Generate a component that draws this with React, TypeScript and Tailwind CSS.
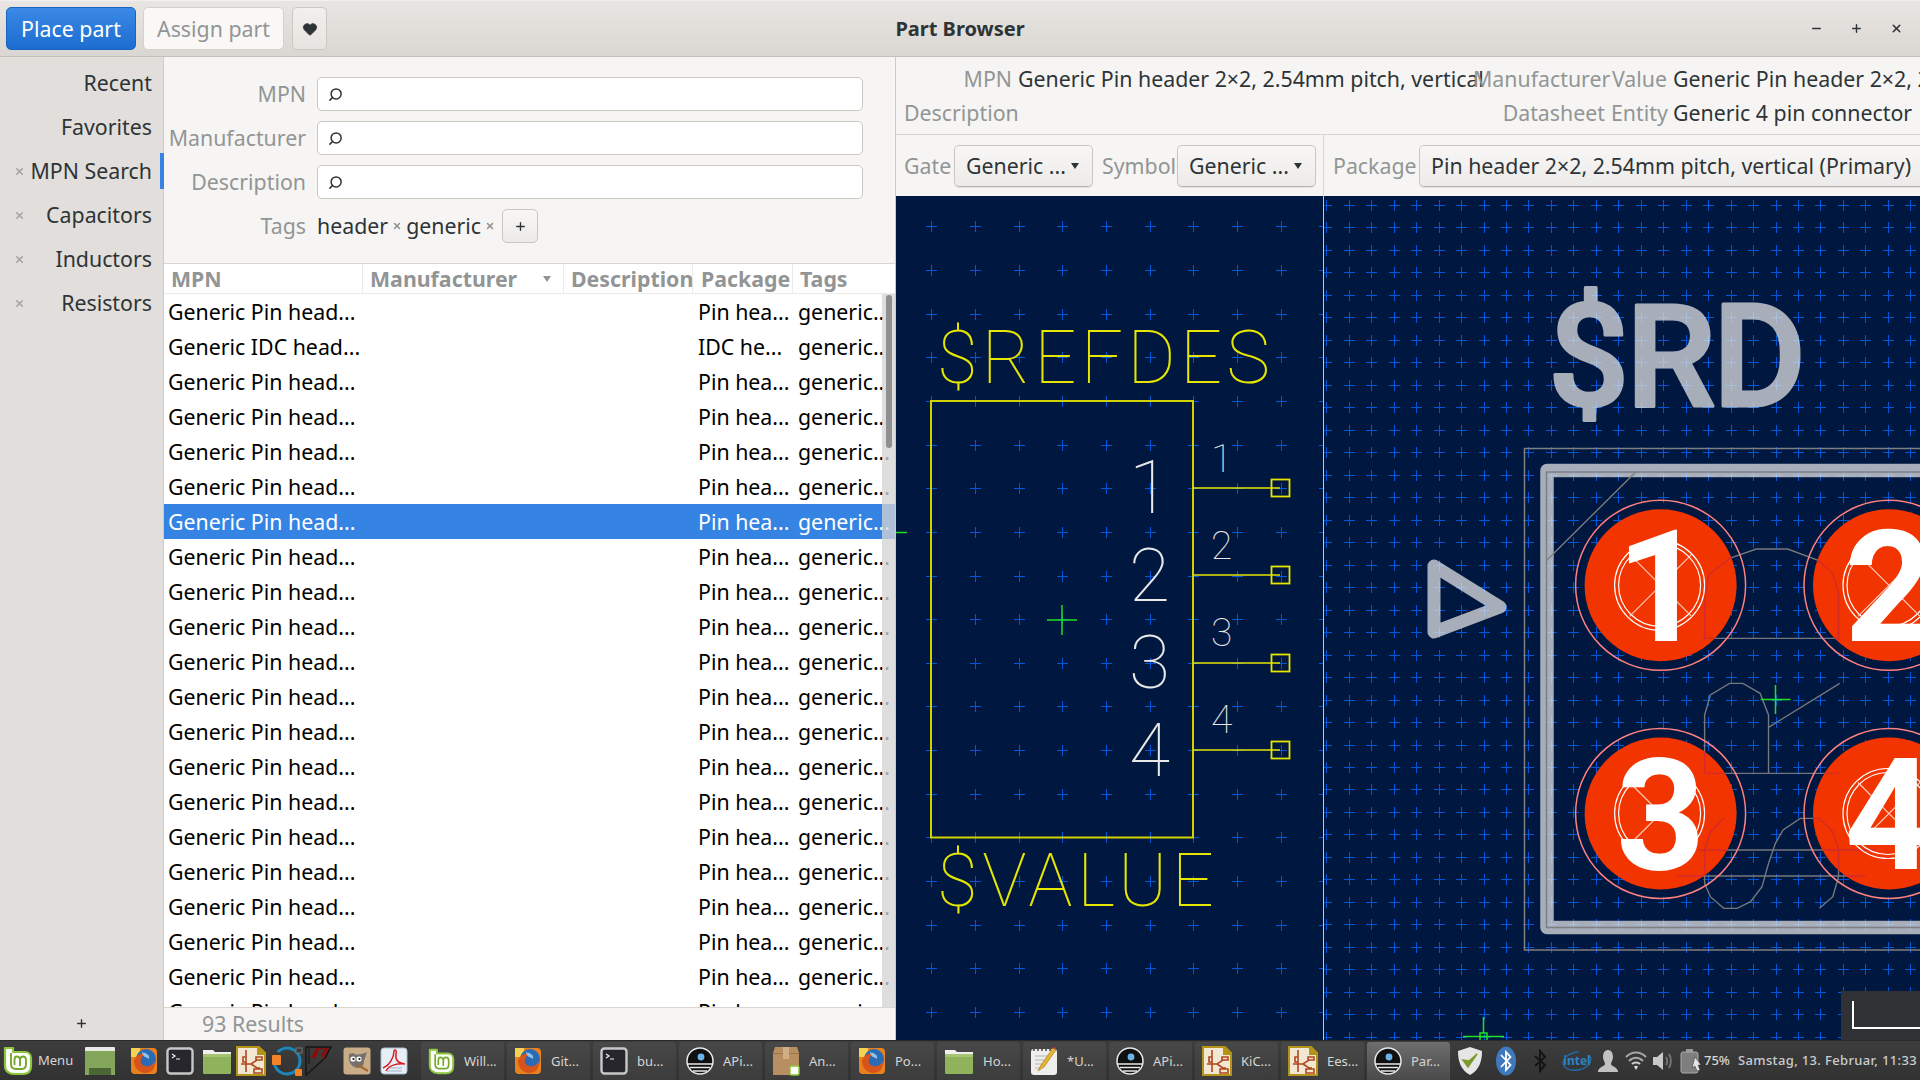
import React from "react";
import { Search, X, Plus, Minus, Heart } from "lucide-react";

const range = (n: number) => Array.from({ length: n }, (_, i) => i);
const crosses = (x0: number, dx: number, nx: number, y0: number, dy: number, ny: number, r = 5.5) => {
  let d = "";
  for (const i of range(nx)) for (const j of range(ny)) {
    const x = Math.round(x0 + i * dx) + 0.5, y = Math.round(y0 + j * dy) + 0.5;
    d += `M${x - r} ${y}H${x + r}M${x} ${y - r}V${y + r}`;
  }
  return d;
};
const z5 = (p: number[][]) => p.map(([x, y]) => `${1320 + x / 2.613},${190 + y / 3}`).join(" ");
const z6 = (p: number[][]) => p.map(([x, y]) => `${1320 + x / 2.613},${630 + y / 3}`).join(" ");

const Arrow = () => (
  <svg width="10" height="6" viewBox="0 0 10 6" className="shrink-0"><path d="M1 0H9L5 6Z" fill="#2e3436" /></svg>
);

const Combo = ({ w, text, arrow = true }: { w: string; text: string; arrow?: boolean }) => (
  <div className={`${w} h-[42px] shrink-0 flex items-center justify-between pl-[11px] pr-[12px] rounded-[5px] border border-[#cdc7c2] border-b-[#b8b2ac] bg-gradient-to-b from-[#f8f7f6] to-[#edebe9] shadow-[0_1px_1px_rgba(0,0,0,0.08)] text-[#2e3436] whitespace-nowrap`}>
    <span>{text}</span>
    {arrow && <Arrow />}
  </div>
);

const SearchRow = ({ label }: { label: string }) => (
  <div className="flex items-center h-[34px]">
    <div className="w-[153px] pr-[11px] text-right text-[#929595]">{label}</div>
    <div className="w-[546px] h-[34px] flex items-center pl-[10px] bg-white rounded-[5px] border border-[#cdc7c2]">
      <Search size={15} strokeWidth={2.4} className="text-[#2e3436] -scale-x-100" />
    </div>
  </div>
);

const tabs = ["Recent", "Favorites", "MPN Search", "Capacitors", "Inductors", "Resistors"];
const rows = range(21);

const Sidebar = () => (
  <div className="w-[164px] shrink-0 bg-[#e1dedb] border-r border-[#cfcac5] flex flex-col">
    <div className="pt-[4px] flex-1">
      {tabs.map((t, i) => (
        <div key={t} className={`h-[44px] flex items-center justify-between pl-[14px] pr-[11px] text-[#2e3436] relative`}>
          {i > 1 ? <X size={11} strokeWidth={3.5} className="text-[#a5a5a3] shrink-0" /> : <span />}
          <span>{t}</span>
          {i === 2 && <div className="absolute right-[-1px] top-[4px] w-[4px] h-[36px] bg-[#3584e4]" />}
        </div>
      ))}
    </div>
    <div className="h-[34px] flex items-center justify-center text-[#2e3436]"><Plus size={13} strokeWidth={2.5} /></div>
  </div>
);

const headers = [
  ["MPN", "pl-[7px]"], ["Manufacturer", "pl-[7px]"], ["Description", "pl-[7px]"], ["Package", "pl-[8px]"], ["Tags", "pl-[7px]"],
];

const List = () => (
  <div className="w-[731px] shrink-0 flex flex-col bg-[#f6f5f4]">
    <div className="h-[206px] shrink-0 pt-[20px] flex flex-col gap-[10px]">
      <SearchRow label="MPN" />
      <SearchRow label="Manufacturer" />
      <SearchRow label="Description" />
      <div className="flex items-center h-[34px]">
        <div className="w-[153px] pr-[11px] text-right text-[#929595]">Tags</div>
        <span className="text-[#2e3436]">header</span>
        <X size={10} strokeWidth={3.5} className="text-[#8e8e8c] mx-[4px]" />
        <span className="text-[#2e3436]">generic</span>
        <X size={10} strokeWidth={3.5} className="text-[#8e8e8c] ml-[4px] mr-[7px]" />
        <div className="w-[36px] h-[34px] flex items-center justify-center rounded-[5px] border border-[#cdc7c2] bg-gradient-to-b from-[#f8f7f6] to-[#edebe9] text-[#2e3436]"><Plus size={13} strokeWidth={2.5} /></div>
      </div>
    </div>
    <div className="flex-1 min-h-0 relative bg-white border-t border-[#d8d5d2] overflow-hidden">
      <div className="grid grid-cols-[199px_201px_129px_100px_102px] h-[30px] border-b border-[#ecebe9] font-bold text-[#929595]">
        {headers.map(([h, c], i) => (
          <div key={h} className={`${c} flex items-center justify-between ${i < 4 ? "border-r border-[#ecebe9]" : ""} ${i === 1 ? "pr-[11px]" : ""}`}>
            <span>{h}</span>
            {i === 1 && <svg width="10" height="6" viewBox="0 0 10 6"><path d="M1 0H9L5 6Z" fill="#929595" /></svg>}
          </div>
        ))}
      </div>
      {rows.map((i) => (
        <div key={i} className={`grid grid-cols-[529px_100px_102px] h-[35px] items-center whitespace-nowrap overflow-hidden ${i === 6 ? "bg-[#3584e4] text-white" : "text-black"}`}>
          <span className="pl-[4px]">{i === 1 ? "Generic IDC head..." : "Generic Pin head..."}</span>
          <span className="pl-[5px]">{i === 1 ? "IDC he..." : "Pin hea..."}</span>
          <span className="pl-[5px]">generic...</span>
        </div>
      ))}
      <div className="absolute right-0 top-[30px] bottom-0 w-[13px] bg-[#d4d4d4c4]">
        <div className="ml-[4px] mt-[1px] w-[6px] h-[153px] rounded-full bg-[#8f8f8f]" />
      </div>
    </div>
    <div className="h-[33px] shrink-0 border-t border-[#d8d5d2] pl-[38px] flex items-center text-[#929595] bg-[#f6f5f4]">93 Results</div>
  </div>
);

const Y = "#e6e600";
const pinY = [488, 575, 663, 750];

const SymbolCanvas = () => (
  <svg viewBox="895 196 428 844" width="428" height="844" className="block shrink-0 bg-[#00173f]">
    <path d={crosses(930.3, 43.65, 10, 226.3, 43.65, 19)} stroke="#0058d8" strokeWidth="1" fill="none" />
    <rect x="930" y="401" width="262" height="436.5" fill="none" stroke="#d2d200" strokeWidth="2" />
    {pinY.map((y) => (
      <g key={y}>
        <line x1="1192" y1={y} x2="1279" y2={y} stroke={Y} strokeWidth="1.6" />
        <rect x="1270.5" y={y - 8.5} width="18" height="17" fill="none" stroke={Y} strokeWidth="1.8" />
      </g>
    ))}
    <g fill={Y} fontFamily="Roboto" fontWeight="100" fontSize="74">
      <text x="936" y="383" textLength="333" lengthAdjust="spacing">$REFDES</text>
      <text x="936" y="906" textLength="277" lengthAdjust="spacing">$VALUE</text>
    </g>
    <g fill="#e8e8e8" fontFamily="Roboto" fontWeight="100">
      <g fontSize="75">
        <text x="1128" y="513">1</text>
        <text x="1128" y="601">2</text>
        <text x="1128" y="688">3</text>
        <text x="1128" y="776">4</text>
      </g>
      <g fontSize="39">
        <text x="1210" y="472">1</text>
        <text x="1210" y="559">2</text>
        <text x="1210" y="646">3</text>
        <text x="1210" y="733">4</text>
      </g>
    </g>
    <g stroke="#20e020" strokeWidth="1.5" fill="none">
      <path d="M1046 620H1076M1061 605V635" />
      <path d="M895 532.5H906" />
    </g>
  </svg>
);

const outline: string[] = [
  z5([[1005, 1350], [1005, 1240], [1015, 1155], [1070, 1105], [1140, 1077], [1222, 1077], [1300, 1110], [1340, 1150], [1355, 1210], [1355, 1350]]),
  z6([[1005, 0], [1005, 25], [1355, 25], [1355, 0]]),
  z6([[1005, 430], [1005, 255], [1020, 195], [1070, 160], [1105, 160], [1150, 190], [1172, 255], [1172, 430]]),
  z6([[1005, 430], [1355, 430]]),
  z6([[1172, 292], [1358, 160]]),
  z6([[990, 660], [1450, 660]]),
  z6([[935, 738], [1425, 738]]),
  z6([[1055, 565], [1020, 605], [1005, 660], [1005, 760], [1020, 800], [1055, 835], [1090, 835], [1125, 815], [1155, 770], [1172, 700], [1190, 640], [1210, 600], [1255, 565], [1305, 565], [1340, 605], [1355, 660], [1355, 740], [1340, 800], [1305, 835]]),
];

const pads = [
  { cx: 1660.6, cy: 585.3, n: "1", x: 1660.6, y: 641 },
  { cx: 1889, cy: 585.3, n: "2", x: 1889, y: 641 },
  { cx: 1660.6, cy: 813.5, n: "3", x: 1660.6, y: 869 },
  { cx: 1889, cy: 813.5, n: "4", x: 1889, y: 869 },
];

const PackageCanvas = () => (
  <svg viewBox="1324 196 596 844" width="596" height="844" className="block shrink-0 bg-[#00173f]">
    <defs>
      <clipPath id="padclip">
        {pads.map((p) => <circle key={p.n} cx={p.cx} cy={p.cy} r="76" />)}
      </clipPath>
    </defs>
    <path d={crosses(1326.3, 22.46, 27, 205, 22.48, 38)} stroke="#0058d8" strokeWidth="1" fill="none" />
    <g opacity="0.75">
      <text x="1548" y="406" fontFamily="Roboto" fontWeight="500" fontSize="143" fill="#e0e0e4" stroke="#e0e0e4" strokeWidth="3" strokeLinejoin="round" textLength="258" lengthAdjust="spacing">$RD</text>
      <path d="M1929 470.5H1547V927.5H1929" fill="none" stroke="#e0e0e4" strokeWidth="13.5" strokeLinejoin="round" />
      <path d="M1434 632V566L1500 607Z" fill="none" stroke="#e0e0e4" strokeWidth="13" strokeLinejoin="round" />
    </g>
    <path d="M1930 448.5H1524.5V950H1930" fill="none" stroke="#7c8084" strokeWidth="1.5" />
    <path d="M1930 472H1546.5V927.5H1930" fill="none" stroke="#7c7f85" strokeWidth="1.5" />
    <line x1="1635.7" y1="472" x2="1547" y2="560" stroke="#7c8084" strokeWidth="1.3" />
    {outline.map((o, i) => <polyline key={i} points={o} fill="none" stroke="#74787c" strokeWidth="1.4" />)}
    {pads.map((p) => (
      <circle key={p.n} cx={p.cx} cy={p.cy} r="76" fill="#f23400" />
    ))}
    <g clipPath="url(#padclip)">
      {outline.map((o, i) => <polyline key={i} points={o} fill="none" stroke="#d42a2c" strokeWidth="1.4" />)}
    </g>
    {pads.map((p) => (
      <g key={p.n}>
        <circle cx={p.cx} cy={p.cy} r="85" fill="none" stroke="#ff8080" strokeWidth="1.5" />
        <circle cx={p.cx - 1} cy={p.cy} r="45" fill="none" stroke="#ffffff" strokeWidth="1.2" />
        <circle cx={p.cx - 1} cy={p.cy} r="41" fill="none" stroke="#ffffff" strokeWidth="1.2" />
        <path d={`M${p.cx - 31} ${p.cy - 31}L${p.cx + 31} ${p.cy + 31}M${p.cx + 31} ${p.cy - 31}L${p.cx - 31} ${p.cy + 31}`} stroke="#ffc8b8" strokeWidth="1.2" />
        <text x={p.x} y={p.y} textAnchor="middle" fontFamily="Roboto" fontWeight="700" fontSize="155" fill="#ffffff">{p.n}</text>
      </g>
    ))}
    <g stroke="#20e020" strokeWidth="1.5" fill="none">
      <path d="M1760.5 699.5H1790.5M1775.5 685V714" />
      <path d="M1463 1036.5H1504M1483.5 1017V1033" />
      <rect x="1480" y="1033" width="7" height="8" />
    </g>
  </svg>
);

const MintIcon = ({ s = 30 }: { s?: number }) => (
  <svg width={s} height={s} viewBox="0 0 30 30" className="shrink-0">
    <path d="M2 3H9V19C9 23 11 24 14 24H20C24 24 25 22 25 19V13C25 10 23 8 20 8H14C10.5 8 11 10 11 13V20" fill="none" stroke="none" />
    <path d="M2 2H10V6H22C26 6 28 9 28 12V20C28 25 25 28 20 28H11C6 28 2 25 2 20Z" fill="#ffffff" stroke="#8cc63f" strokeWidth="2.2" strokeLinejoin="round" />
    <path d="M8 7V18C8 21 10 23 13 23H19C21.5 23 23 21 23 18V14C23 11.5 22 10.5 20 10.5S17 12 17 14V20M17 14C17 12 15.5 10.5 13.5 10.5S11.5 12 11.5 14V19" fill="none" stroke="#76a82c" strokeWidth="1.9" />
  </svg>
);
const FirefoxIcon = () => (
  <svg width="28" height="28" viewBox="0 0 28 28" className="shrink-0">
    <rect x="1" y="1" width="26" height="26" rx="4" fill="#e8821e" />
    <rect x="1" y="1" width="9" height="9" fill="#f6d152" />
    <circle cx="16" cy="12" r="10" fill="#2a6bb5" />
    <path d="M4 14C4 24 14 28 20 25C24 23 26 18 24 15C22 20 14 21 11 16C10 13 12 9 16 6C10 6 5 9 4 14Z" fill="#d9541a" />
    <path d="M12 5C15 6 20 7 19 12C16 10 13 10 12 5Z" fill="#8fc3e8" />
  </svg>
);
const TerminalIcon = () => (
  <svg width="28" height="28" viewBox="0 0 28 28" className="shrink-0">
    <rect x="1.5" y="1.5" width="25" height="25" rx="3" fill="#26262c" stroke="#c6c8c9" strokeWidth="2.4" />
    <path d="M6 7L9 9L6 11M10 12H14" fill="none" stroke="#f4f4f4" strokeWidth="1.2" />
  </svg>
);
const FolderIcon = () => (
  <svg width="30" height="28" viewBox="0 0 30 28" className="shrink-0">
    <path d="M1 6V3H11L13 5H29V9H1Z" fill="#f0f0ee" />
    <rect x="1" y="7" width="28" height="20" rx="1.5" fill="#8fb35a" />
    <rect x="1" y="7" width="28" height="3" fill="#a7c474" />
  </svg>
);
const GreenFiles = () => (
  <svg width="32" height="30" viewBox="0 0 32 30" className="shrink-0">
    <rect x="1" y="1" width="30" height="5" rx="1" fill="#e8e8e6" />
    <rect x="1" y="5" width="30" height="24" fill="#84a65a" />
    <rect x="5" y="22" width="22" height="7" fill="#4b6534" />
  </svg>
);
const SheetIcon = () => (
  <svg width="30" height="30" viewBox="0 0 30 30" className="shrink-0">
    <path d="M1 1H23L29 7V29H1Z" fill="#f1e7d3" stroke="#b49418" strokeWidth="2" />
    <path d="M21 1H23L29 7V9H21Z" fill="#b49418" />
    <path d="M10 4V11M10 11H7V16H10V11M10 16V26M5 18H15L21 14H26V11H20V14M15 18L21 22H24M18 23H26V27H18Z" fill="none" stroke="#b1481f" strokeWidth="1.6" />
  </svg>
);
const RingIcon = () => (
  <svg width="32" height="32" viewBox="0 0 32 32" className="shrink-0">
    <circle cx="16" cy="16" r="13" fill="none" stroke="#1d86b8" strokeWidth="3" strokeDasharray="52 12" transform="rotate(-60 16 16)" />
    <rect x="1" y="10" width="9" height="10" fill="#f28326" rx="1" />
    <rect x="25" y="3" width="6" height="5" fill="#3a3a3a" stroke="#777" />
    <rect x="24" y="24" width="7" height="7" fill="#f28326" rx="1" />
  </svg>
);
const LtIcon = () => (
  <svg width="28" height="30" viewBox="0 0 28 30" className="shrink-0">
    <path d="M1 1H26L18 14L1 29Z" fill="none" stroke="#151515" strokeWidth="1.4" />
    <path d="M4 2V18M26 1L20 13" stroke="#151515" fill="none" />
    <path d="M6 12L11 2H24L19 13L16 9L20 3L14 3L11 12Z" fill="#8a0d0d" />
  </svg>
);
const GimpIcon = () => (
  <svg width="28" height="28" viewBox="0 0 28 28" className="shrink-0">
    <rect x="0.5" y="0.5" width="27" height="27" rx="3" fill="#c9ad86" />
    <path d="M6 7C5 15 8 20 15 21C19 21 21 18 21 14L24 5C20 7 13 9 10 6Z" fill="#75716c" />
    <circle cx="10" cy="12" r="2.6" fill="#fff" /><circle cx="10.5" cy="12" r="1.1" fill="#111" />
    <circle cx="16" cy="12" r="2.6" fill="#fff" /><circle cx="16.5" cy="12" r="1.1" fill="#111" />
    <path d="M15 18L25 24" stroke="#a46b2e" strokeWidth="2.4" />
  </svg>
);
const AcrobatIcon = () => (
  <svg width="28" height="28" viewBox="0 0 28 28" className="shrink-0">
    <rect x="1" y="1" width="26" height="26" rx="3" fill="#e8eef6" stroke="#a8bbd2" />
    <path d="M3 21C10 18 14 10 14 4C15 2 17 3 16 7C15 13 18 16 25 17C18 16 9 18 6 24" fill="none" stroke="#d41f1f" strokeWidth="1.5" />
    <path d="M7 24H22M10 21H22" stroke="#9db0c8" strokeWidth="1" />
  </svg>
);
const BoxIcon = () => (
  <svg width="28" height="32" viewBox="0 0 28 32" className="shrink-0">
    <path d="M3 2H25L27 8V30H1V8Z" fill="#b88f60" />
    <rect x="1" y="8" width="26" height="1" fill="#9a7448" />
    <rect x="11" y="2" width="6" height="12" fill="#d1ae85" />
    <rect x="18" y="21" width="9" height="9" rx="1.5" fill="#ffffff" stroke="#8cc63f" strokeWidth="1.5" />
  </svg>
);
const NoteIcon = () => (
  <svg width="28" height="30" viewBox="0 0 28 30" className="shrink-0">
    <rect x="1" y="3" width="26" height="26" rx="3" fill="#eeeeec" />
    <path d="M4 1V5M8 1V5M12 1V5M16 1V5M20 1V5" stroke="#444" strokeWidth="1.5" />
    <path d="M5 10H21M5 14H19M5 18H14M5 22H11" stroke="#b5b5b5" />
    <path d="M8 25L11 19L23 2L26 4L14 21Z" fill="#e9b32e" stroke="#9a7420" strokeWidth="0.6" />
    <path d="M23 2L26 4L25 1Z" fill="#c44" />
  </svg>
);
const HorizonIcon = () => (
  <svg width="28" height="28" viewBox="0 0 28 28" className="shrink-0">
    <circle cx="14" cy="14" r="13" fill="#101010" stroke="#e8e8e8" strokeWidth="1.5" />
    <circle cx="15" cy="10" r="3.4" fill="#6ab4ea" />
    <path d="M2 17H26M4 20.5H24M7 24H21" stroke="#e8e8e8" strokeWidth="1.4" />
  </svg>
);

const winBtns: [React.ReactNode, string][] = [
  [<MintIcon s={27} />, "Will..."], [<FirefoxIcon />, "Git..."], [<TerminalIcon />, "bu..."], [<HorizonIcon />, "APi..."],
  [<BoxIcon />, "An..."], [<FirefoxIcon />, "Po..."], [<FolderIcon />, "Ho..."], [<NoteIcon />, "*U..."],
  [<HorizonIcon />, "APi..."], [<SheetIcon />, "KiC..."], [<SheetIcon />, "Ees..."], [<HorizonIcon />, "Par..."],
];

const Taskbar = () => (
  <div className="h-[40px] shrink-0 flex items-stretch bg-gradient-to-b from-[#3d3d3d] to-[#323232] border-t border-[#2a2a2a] text-[13px] text-[#d6d6d6] font-['Noto_Sans',sans-serif] overflow-hidden">
    <div className="w-[421px] shrink-0 flex items-center pl-[3px]">
      <MintIcon />
      <span className="ml-[5px] mr-[11px]">Menu</span>
      <GreenFiles />
      <div className="w-[14px] shrink-0" />
      <FirefoxIcon />
      <div className="w-[8px] shrink-0" />
      <TerminalIcon />
      <div className="w-[8px] shrink-0" />
      <FolderIcon />
      <div className="w-[4px] shrink-0" />
      <SheetIcon />
      <div className="w-[5px] shrink-0" />
      <RingIcon />
      <div className="w-[2px] shrink-0" />
      <LtIcon />
      <div className="w-[10px] shrink-0" />
      <GimpIcon />
      <div className="w-[9px] shrink-0" />
      <AcrobatIcon />
    </div>
    <div className="flex gap-[3px] pt-[1px]">
      {winBtns.map(([icon, label], i) => (
        <div key={i} className={`w-[83px] flex items-center gap-[9px] pl-[7px] rounded-t-[3px] ${i === 11 ? "bg-gradient-to-b from-[#6e6e6e] to-[#4a4a4a]" : "bg-gradient-to-b from-[#484848] to-[#3c3c3c]"}`}>
          {icon}
          <span className="whitespace-nowrap">{label}</span>
        </div>
      ))}
    </div>
    <div className="flex items-center pl-[7px] flex-1 min-w-0 whitespace-nowrap">
      <svg width="26" height="30" viewBox="0 0 26 30" className="shrink-0">
        <path d="M13 1L25 5C25 16 22 24 13 29C4 24 1 16 1 5Z" fill="#e6e6e6" />
        <path d="M6 14L11 21L20 8L12 15Z" fill="#7d9b2d" stroke="#7d9b2d" strokeWidth="1.5" />
      </svg>
      <svg width="20" height="30" viewBox="0 0 20 30" className="ml-[13px] shrink-0">
        <ellipse cx="10" cy="15" rx="10" ry="14.5" fill="#3f78bd" />
        <path d="M5 9L14.5 19L10 24V6L14.5 11L5 21" fill="none" stroke="#fff" strokeWidth="1.8" />
      </svg>
      <svg width="14" height="24" viewBox="0 0 14 24" className="ml-[17px] shrink-0">
        <path d="M2 7L12 16L7 22V2L12 8L2 17" fill="none" stroke="#141414" strokeWidth="2" />
      </svg>
      <svg width="32" height="22" viewBox="0 0 32 22" className="ml-[15px] shrink-0">
        <ellipse cx="15" cy="11" rx="14" ry="9" fill="none" stroke="#1f6aa8" strokeWidth="1.4" strokeDasharray="58 12" transform="rotate(-12 15 11)" />
        <text x="15" y="15" textAnchor="middle" fontSize="12" fill="#2b83c6" fontFamily="Noto Sans" fontWeight="700">intel</text>
      </svg>
      <svg width="22" height="24" viewBox="0 0 22 24" className="ml-[3px] shrink-0">
        <path d="M11 1C15 1 16 5 16 8C16 11 14 13 14 15C14 17 20 18 21 22V23H1V22C2 18 8 17 8 15C8 13 6 11 6 8C6 5 7 1 11 1Z" fill="#c2c2c2" />
      </svg>
      <svg width="22" height="20" viewBox="0 0 22 20" className="ml-[6px] shrink-0">
        <path d="M1 6C7 0 15 0 21 6M4 10C8 5.5 14 5.5 18 10" fill="none" stroke="#a8a8a8" strokeWidth="2" />
        <path d="M7 13C9 11 13 11 15 13" fill="none" stroke="#cfcfcf" strokeWidth="2" />
        <path d="M9 15.5L11 19L13 15.5C12 14.5 10 14.5 9 15.5Z" fill="#e0e0e0" />
      </svg>
      <svg width="22" height="24" viewBox="0 0 22 24" className="ml-[5px] shrink-0">
        <path d="M1 8H5L11 3V21L5 16H1Z" fill="#c9c9c9" />
        <path d="M14 8C15.5 10 15.5 14 14 16M17 5C19.5 9 19.5 15 17 19" fill="none" stroke="#777" strokeWidth="1.8" />
      </svg>
      <svg width="22" height="26" viewBox="0 0 22 26" className="ml-[6px] shrink-0">
        <rect x="6" y="1" width="7" height="3" fill="#9a9a9a" />
        <rect x="1" y="4" width="17" height="21" rx="2" fill="#7e7e7e" stroke="#aaa" />
        <path d="M15 9L21 17L18 17L20 22L17 23L15 18L12 20Z" fill="#e6e6e6" stroke="#333" strokeWidth="0.5" />
      </svg>
      <span className="ml-[2px] w-[34px] font-medium">75%</span>
      <span className="tracking-[0.35px] font-medium text-[#c8cdd2]">Samstag, 13. Februar, 11:33</span>
    </div>
  </div>
);

export default function App() {
  return (
    <div className="w-[1920px] h-[1080px] flex flex-col overflow-hidden font-['Noto_Sans',sans-serif] text-[21.33px] leading-none bg-[#f6f5f4]">
      <div className="h-[57px] shrink-0 grid grid-cols-[1fr_auto_1fr] items-center bg-gradient-to-b from-[#e8e5e2] to-[#dad7d3] border-t border-[#f2f0ee] border-b border-b-[#c4bfb9]">
        <div className="flex items-center pl-[6px] gap-[7px]">
          <div className="w-[130px] h-[43px] flex items-center justify-center rounded-[5px] bg-gradient-to-b from-[#3a89e6] to-[#1c6dd0] border border-[#1b64bd] text-white">Place part</div>
          <div className="w-[141px] h-[43px] flex items-center justify-center rounded-[5px] bg-[#f9f8f7] border border-[#d5d0cb] text-[#929595]">Assign part</div>
          <div className="w-[35px] h-[43px] ml-[1px] flex items-center justify-center rounded-[5px] bg-gradient-to-b from-[#f2f0ee] to-[#e6e3e0] border border-[#cdc7c2] text-[#2e3436]"><Heart size={16} fill="currentColor" strokeWidth={1} /></div>
        </div>
        <div className="font-bold text-[20px] text-[#2e3436]">Part Browser</div>
        <div className="flex justify-end items-center pr-[17px] gap-[27px] text-[#2e3436]">
          <Minus size={13} strokeWidth={2.6} />
          <Plus size={13} strokeWidth={2.6} />
          <X size={13} strokeWidth={2.8} />
        </div>
      </div>
      <div className="flex-1 min-h-0 flex">
        <Sidebar />
        <List />
        <div className="flex-1 min-w-0 flex flex-col border-l border-[#cfcac5] overflow-hidden">
          <div className="h-[78px] shrink-0 bg-[#f6f5f4] border-b border-[#d8d5d2] pl-[8px] flex flex-col justify-center">
            <div className="grid grid-cols-[108px_449px_132px_56px_400px] gap-x-[6px] gap-y-[12px] whitespace-nowrap">
              <span className="text-right text-[#929595]">MPN</span>
              <span className="text-[#2e3436]">Generic Pin header 2×2, 2.54mm pitch, vertical</span>
              <span className="text-right text-[#929595]">Manufacturer</span>
              <span className="text-right text-[#929595]">Value</span>
              <span className="text-[#2e3436]">Generic Pin header 2×2, 2.54mm pitch, vertical</span>
              <span className="text-right text-[#929595]">Description</span>
              <span />
              <span className="text-right text-[#929595]">Datasheet</span>
              <span className="text-right text-[#929595]">Entity</span>
              <span className="text-[#2e3436]">Generic 4 pin connector</span>
            </div>
          </div>
          <div className="h-[61px] shrink-0 flex bg-[#f6f5f4] items-center">
            <div className="w-[428px] shrink-0 h-full flex items-center pl-[8px] border-r border-[#d8d5d2]">
              <span className="w-[45px] text-[#929595]">Gate</span>
              <span className="w-[5px]" />
              <Combo w="w-[139px]" text="Generic ..." />
              <span className="w-[9px]" />
              <span className="w-[70px] text-[#929595]">Symbol</span>
              <span className="w-[5px]" />
              <Combo w="w-[139px]" text="Generic ..." />
            </div>
            <div className="flex-1 min-w-0 h-full flex items-center pl-[9px] overflow-hidden">
              <span className="w-[80px] shrink-0 text-[#929595]">Package</span>
              <span className="w-[6px] shrink-0" />
              <Combo w="w-[520px]" text="Pin header 2×2, 2.54mm pitch, vertical (Primary)" arrow={false} />
            </div>
          </div>
          <div className="flex-1 min-h-0 flex relative">
            <div className="w-[428px] shrink-0 overflow-hidden border-r border-[#c8c8c8]"><SymbolCanvas /></div>
            <div className="flex-1 min-w-0 overflow-hidden"><PackageCanvas /></div>
            <div className="absolute right-0 bottom-0 w-[79px] h-[49px] bg-[#2f3134] pt-[10px] pl-[11px]">
              <div className="h-[28px] border-l-2 border-b-2 border-white" />
            </div>
          </div>
        </div>
      </div>
      <Taskbar />
    </div>
  );
}
